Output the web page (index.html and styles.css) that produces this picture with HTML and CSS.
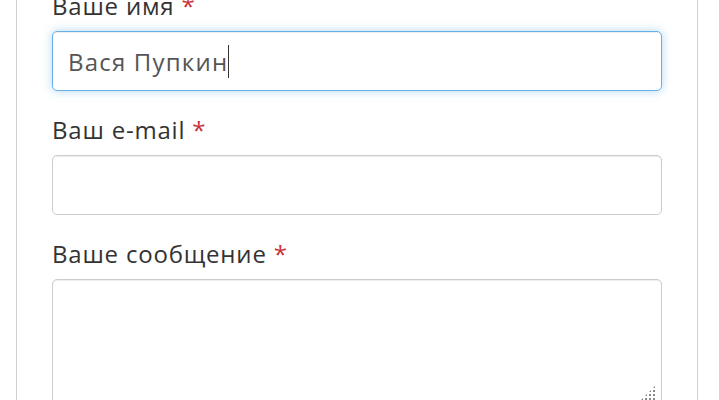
FILE: index.html
```html
<!DOCTYPE html>
<html lang="ru">
<head>
<meta charset="utf-8">
<link rel="stylesheet" href="styles.css">
</head>
<body>
<div class="card">
  <form class="form">
    <div class="group">
      <label class="label">Ваше имя <span class="req">*</span></label>
      <div class="input focused"><span class="value">Вася Пупкин</span><span class="caret"></span></div>
    </div>
    <div class="group">
      <label class="label">Ваш e-mail <span class="req">*</span></label>
      <div class="input"></div>
    </div>
    <div class="group">
      <label class="label">Ваше сообщение <span class="req">*</span></label>
      <div class="textarea"><span class="grip"></span></div>
    </div>
  </form>
</div>
</body>
</html>
```
FILE: styles.css
```css
html, body {
  margin: 0;
  padding: 0;
  background: #fff;
  overflow: hidden;
}
body {
  font-family: "Open Sans", "Liberation Sans", sans-serif;
  color: #333;
}
.card {
  margin: -10px 21px 0 16px;
  border: 1px solid #cfcfcf;
  border-top: none;
  padding: 0 35px 40px 35px;
  background: #fff;
}
.form {
  display: flex;
  flex-direction: column;
  gap: 23px;
}
.group {
  display: flex;
  flex-direction: column;
}
.label {
  font-size: 24px;
  line-height: 32px;
  letter-spacing: 0.8px;
  margin-bottom: 9px;
}
.req {
  color: #c7303a;
}
.input {
  height: 58px;
  border: 1px solid #ccc;
  border-radius: 5px;
  box-shadow: inset 0 1px 1px rgba(0,0,0,0.075);
  display: flex;
  align-items: center;
  padding: 0 15px;
  font-size: 24px;
  letter-spacing: 1.2px;
  color: #555;
}
.input.focused {
  border-color: #66afe9;
  box-shadow: inset 0 1px 1px rgba(0,0,0,0.075), 0 0 10px rgba(102,175,233,0.5);
}
.caret {
  display: inline-block;
  width: 1px;
  height: 33px;
  background: #333;
}
.textarea {
  position: relative;
  height: 124px;
  border: 1px solid #ccc;
  border-radius: 5px;
  box-shadow: inset 0 1px 1px rgba(0,0,0,0.075);
}
.grip {
  position: absolute;
  right: 5px;
  bottom: 3px;
  width: 16px;
  height: 16px;
  background-image: radial-gradient(circle, #8a8a8a 0.9px, transparent 1.3px);
  background-size: 4px 4px;
  clip-path: polygon(100% 0, 100% 100%, 0 100%);
}
```
